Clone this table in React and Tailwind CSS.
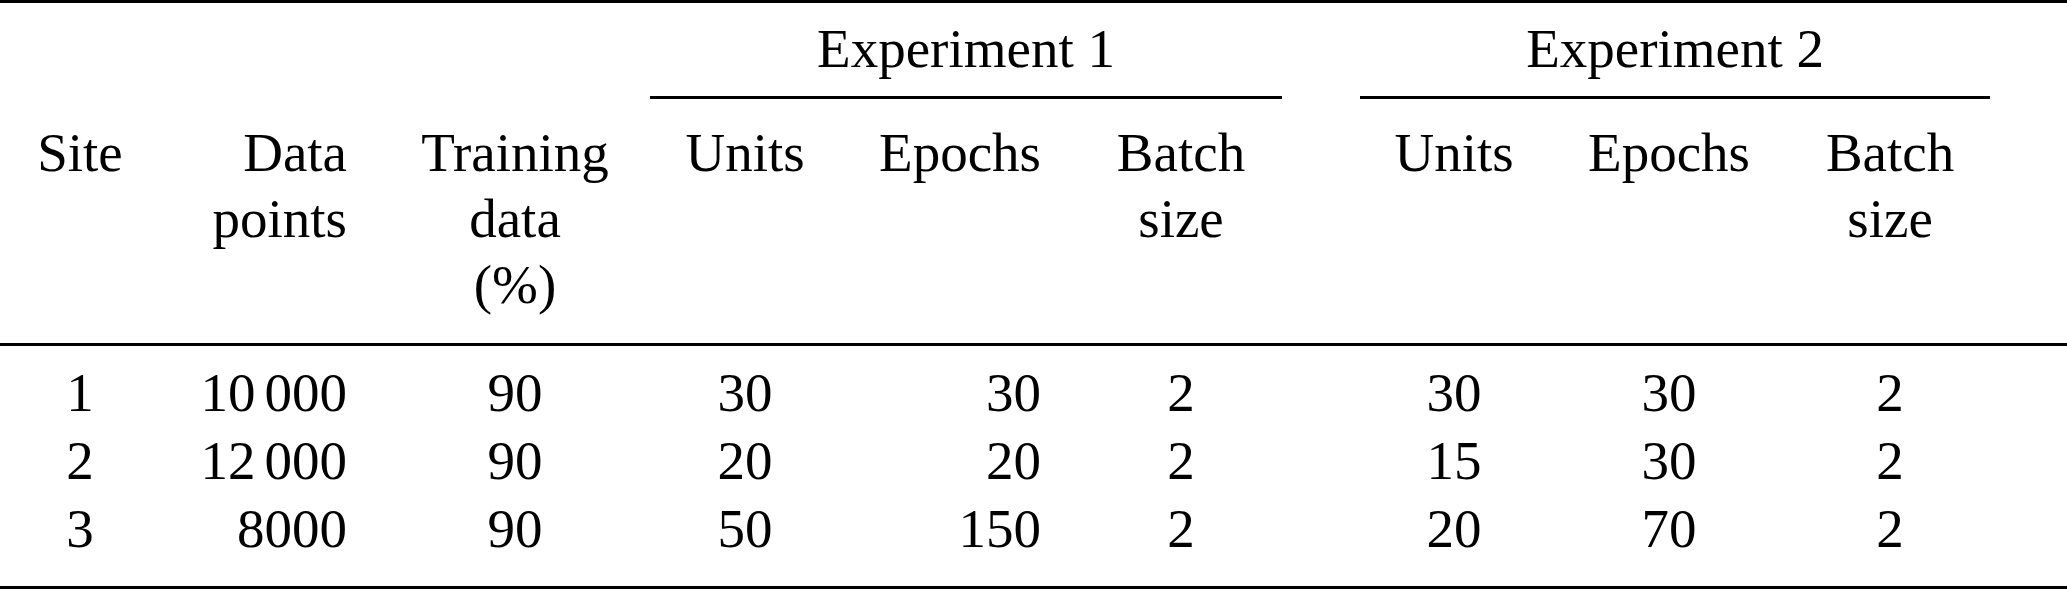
import React from 'react';

// 표 데이터
const rows = [
  { site: '1', points: ['10', '000'], train: '90', u1: '30', e1: '30', b1: '2', u2: '30', e2: '30', b2: '2' },
  { site: '2', points: ['12', '000'], train: '90', u1: '20', e1: '20', b1: '2', u2: '15', e2: '30', b2: '2' },
  { site: '3', points: ['8000'], train: '90', u1: '50', e1: '150', b1: '2', u2: '20', e2: '70', b2: '2' },
];

const Points = ({ parts }) => {
  if (parts.length === 1) return <>{parts[0]}</>;
  return (
    <>
      {parts[0]}
      <span className="inline-block w-[9px]" />
      {parts[1]}
    </>
  );
};

const App = () => {
  const head = 'align-top pt-[21px] pb-[25px] leading-[66px] font-normal border-b-[3px] border-black whitespace-nowrap';

  return (
    <div className="w-[2067px] h-[589px] bg-white text-black font-['Liberation_Serif','Times_New_Roman',serif] text-[55px]">
      <table className="w-[2067px] table-fixed border-separate border-spacing-0 border-t-[3px] border-b-[3px] border-black">
        <colgroup>
          <col className="w-[160px]" />
          <col className="w-[220px]" />
          <col className="w-[270px]" />
          <col className="w-[190px]" />
          <col className="w-[240px]" />
          <col className="w-[202px]" />
          <col className="w-[78px]" />
          <col className="w-[188px]" />
          <col className="w-[242px]" />
          <col className="w-[200px]" />
          <col className="w-[77px]" />
        </colgroup>
        <thead>
          <tr>
            <th colSpan={3} />
            <th colSpan={3} className="pt-[13px] pb-[14px] leading-[66px] font-normal text-center border-b-[3px] border-black">
              Experiment 1
            </th>
            <th />
            <th colSpan={3} className="pt-[13px] pb-[14px] leading-[66px] font-normal text-center border-b-[3px] border-black">
              Experiment 2
            </th>
            <th />
          </tr>
          <tr>
            <th className={`${head} text-center`}>Site</th>
            <th className={`${head} text-right pr-[33px]`}>Data<br />points</th>
            <th className={`${head} text-center`}>Training<br />data<br />(%)</th>
            <th className={`${head} text-center`}>Units</th>
            <th className={`${head} text-right pr-[39px]`}>Epochs</th>
            <th className={`${head} text-center`}>Batch<br />size</th>
            <th className={head} />
            <th className={`${head} text-center`}>Units</th>
            <th className={`${head} text-center`}>Epochs</th>
            <th className={`${head} text-center`}>Batch<br />size</th>
            <th className={head} />
          </tr>
        </thead>
        <tbody>
          {rows.map((r, i) => {
            const pad = i === 0 ? 'pt-[13px]' : i === rows.length - 1 ? 'pb-[23px]' : '';
            const cell = `leading-[68px] whitespace-nowrap ${pad}`;
            return (
              <tr key={i}>
                <td className={`${cell} text-center`}>{r.site}</td>
                <td className={`${cell} text-right pr-[33px]`}><Points parts={r.points} /></td>
                <td className={`${cell} text-center`}>{r.train}</td>
                <td className={`${cell} text-center`}>{r.u1}</td>
                <td className={`${cell} text-right pr-[39px]`}>{r.e1}</td>
                <td className={`${cell} text-center`}>{r.b1}</td>
                <td className={cell} />
                <td className={`${cell} text-center`}>{r.u2}</td>
                <td className={`${cell} text-center`}>{r.e2}</td>
                <td className={`${cell} text-center`}>{r.b2}</td>
                <td className={cell} />
              </tr>
            );
          })}
        </tbody>
      </table>
    </div>
  );
};

export default App;
